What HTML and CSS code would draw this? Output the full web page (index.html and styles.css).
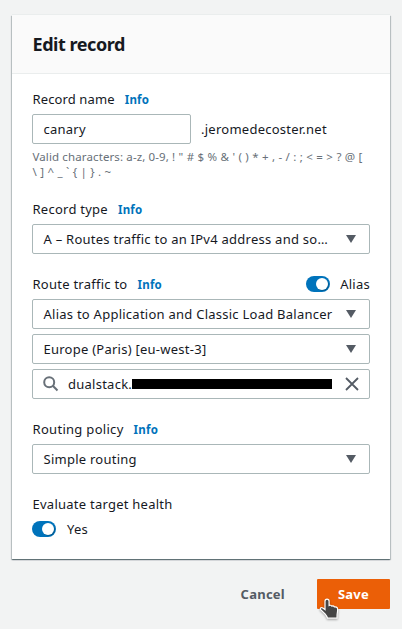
FILE: index.html
```
<!DOCTYPE html>
<html lang="en">
<head>
<meta charset="utf-8">
<title>Edit record</title>
<link rel="stylesheet" href="styles.css">
</head>
<body>
<main class="panel">
  <header class="panel-header"><h1>Edit record</h1></header>
  <div class="panel-body">
    <section class="group name-group">
      <div class="label"><span class="t-name">Record name</span><a class="info">Info</a></div>
      <div class="name-row"><div class="field name-field"><span class="t-canary">canary</span></div><span class="domain">.jeromedecoster.net</span></div>
      <div class="help"><div class="help-a">Valid characters: a-z, 0-9, <span class="symbols">! " # $ % &amp; ' ( ) * + , - / : ; &lt; = &gt; ? @ [</span></div><div class="help-b">\ ] ^ _ ` { | } . ~</div></div>
    </section>
    <section class="group">
      <div class="label"><span class="t-type">Record type</span><a class="info">Info</a></div>
      <div class="field"><span class="t-routes">A – Routes traffic to an IPv4 address and so…</span><i class="arrow"></i></div>
    </section>
    <section class="group">
      <div class="label"><span class="t-traffic">Route traffic to</span><a class="info">Info</a><span class="alias"><i class="toggle"></i><span class="t-alias">Alias</span></span></div>
      <div class="stack">
        <div class="field"><span class="t-balancer">Alias to Application and Classic Load Balancer</span><i class="arrow"></i></div>
        <div class="field"><span class="t-region">Europe (Paris) [eu-west-3]</span><i class="arrow"></i></div>
        <div class="field search">
          <svg class="lens" width="16" height="16" viewBox="0 0 16 16"><circle cx="6.2" cy="6.2" r="5"/><path d="M9.8 9.8l4.7 4.7"/></svg>
          <span class="t-dual">dualstack.</span><span class="redacted"></span>
          <svg class="close" width="14" height="14" viewBox="0 0 14 14"><path d="M1 1l12 12M13 1L1 13"/></svg>
        </div>
      </div>
    </section>
    <section class="group">
      <div class="label"><span class="t-policy">Routing policy</span><a class="info">Info</a></div>
      <div class="field"><span class="t-simple">Simple routing</span><i class="arrow"></i></div>
    </section>
    <section class="group">
      <div class="label"><span class="t-health">Evaluate target health</span></div>
      <div class="yes-row"><i class="toggle"></i><span class="t-yes">Yes</span></div>
    </section>
  </div>
</main>
<footer class="actions">
  <span class="cancel">Cancel</span>
  <div class="save"><span class="t-save">Save</span>
    <svg class="cursor" width="22" height="24" viewBox="0 0 22 24"><path d="M8 2.200c1.300 0 2.100.900 2.100 2.100v4.200c.8-.5 2.200-.3 2.700.6.900-.4 2.100-.1 2.600.8 1.200-.3 3 .2 3.200 1.800.2 2-.1 3.800-.5 5.800l-.1 3.700H8.500c-.3-2-1.900-3.500-3.500-5.400L1.400 12.400c-.6-1.600 1.100-2.300 2.400-1.500l2.200 1.600V4.300c0-1.200.8-2.100 2-2.100z"/></svg>
  </div>
</footer>
</body>
</html>
```
FILE: styles.css
```
* { box-sizing: border-box; }
body {
  margin: 0;
  padding: 15px 12px 0;
  height: 629px;
  overflow: hidden;
  background: #f2f3f3;
  color: #16191f;
  font: 13px/20px "Noto Sans", sans-serif;
  letter-spacing: .25px;
}
span, a { white-space: nowrap; }
.panel {
  width: 378px;
  height: 544px;
  background: #fff;
  box-shadow: 0 -1px 0 0 #eaeded, 0 1px 1px 0 rgba(0, 28, 36, .4), 1px 1px 1px 0 rgba(0, 28, 36, .18), -1px 1px 1px 0 rgba(0, 28, 36, .18);
}
.panel-header {
  height: 59px;
  padding: 0 20.5px;
  background: #fafafa;
  border-bottom: 1px solid #eaeded;
}
h1 { margin: 0; font-size: 18px; line-height: 58px; font-weight: 700; letter-spacing: -.45px; }
.panel-body { padding: 15px 20px 0; }
.group { height: 75px; }
.group:nth-child(1) { height: 110px; }
.group:nth-child(3) { height: 145px; }
.label { display: flex; align-items: center; height: 20px; margin-bottom: 5px; padding-left: .5px; }
.t-name { letter-spacing: .12px; }
.t-policy { letter-spacing: .3px; }
.info { margin-left: 10px; color: #0073bb; font-size: 11.5px; font-weight: 700; padding-top: 1px; }
.field {
  display: flex;
  align-items: center;
  width: 338px;
  height: 30px;
  padding: 0 13px 0 10.5px;
  border: 1px solid #aab7b8;
  border-radius: 2px;
  background: #fff;
}
.name-row { display: flex; align-items: center; }
.name-field { width: 159px; margin-right: 10px; }
.help { margin: 5px 0 0 .5px; color: #687078; font-size: 11.5px; line-height: 15px; letter-spacing: .12px; white-space: nowrap; }
.symbols, .help-b { word-spacing: .2px; }
.arrow {
  margin-left: auto;
  border: 5px solid transparent;
  border-top: 8px solid #545b64;
  border-bottom: 0;
}
.stack { display: grid; gap: 5px; }
.alias { display: flex; align-items: center; gap: 10px; margin-left: auto; }
.toggle { width: 24px; height: 16px; padding: 2px; border-radius: 8px; background: #0073bb; flex: none; }
.toggle::after { content: ""; display: block; width: 12px; height: 12px; margin-left: 8px; border-radius: 50%; background: #fff; box-shadow: 1px 1px 0 rgba(0, 28, 36, .25); }
.search { padding: 0 10px; }
.lens { margin-right: 9px; fill: none; stroke: #687078; stroke-width: 2; }
.t-dual { width: 64px; }
.redacted { width: 200px; height: 10px; background: #000; }
.close { margin-left: auto; fill: none; stroke: #545b64; stroke-width: 1.8; }
.yes-row { display: flex; align-items: center; gap: 11px; height: 20px; }
.actions { display: flex; align-items: center; justify-content: flex-end; width: 378px; height: 30px; margin-top: 20px; font-weight: 700; }
.cancel { color: #545b64; margin-right: 32px; }
.save { position: relative; width: 73px; height: 30px; line-height: 31px; text-align: center; background: #eb5f07; color: #fff; border-radius: 1px; }
.cursor { position: absolute; left: 2px; top: 18px; fill: #454545; stroke: #fff; stroke-width: 1.2; filter: drop-shadow(0 1px 1px rgba(0, 0, 0, .35)); }
```
